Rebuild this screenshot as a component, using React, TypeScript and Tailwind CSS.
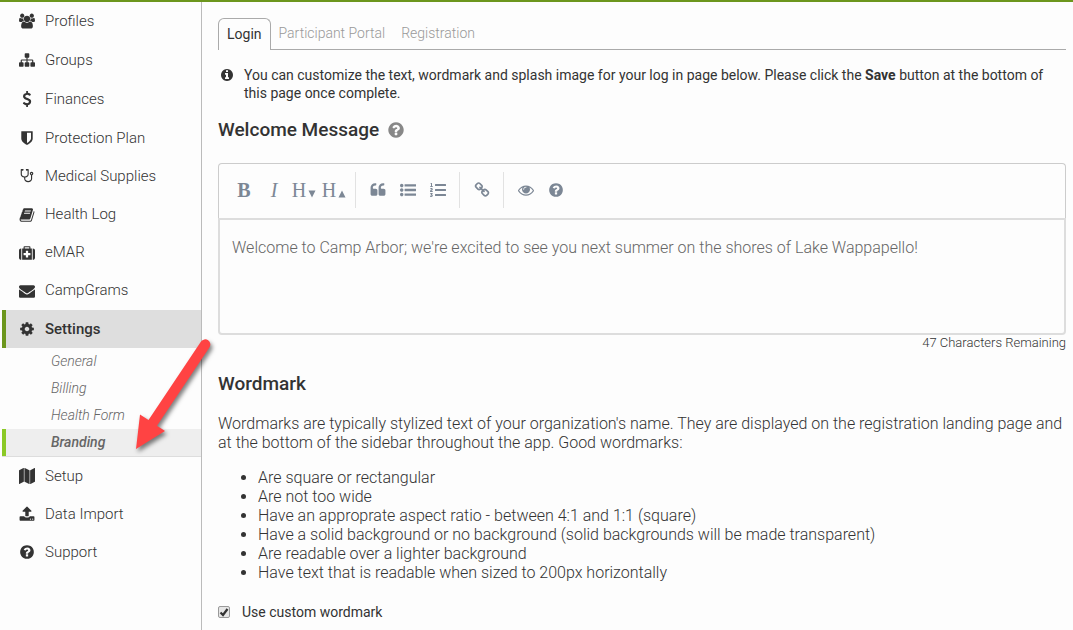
import React from 'react';
import { FaListOl } from 'react-icons/fa';

const ICONS = {
  users:
    'M593 896q-162 5-265 128h-134q-82 0-138-40.5t-56-118.5q0-353 124-353 6 0 43.5 21t97.5 42.5 119 21.5q67 0 133-23-5 37-5 66 0 139 81 256zm1071 637q0 120-73 189.5t-194 69.5h-874q-121 0-194-69.5t-73-189.5q0-53 3.5-103.5t14-109 26.5-108.5 43-97.5 62-81 85.5-53.5 111.5-20q10 0 43 21.5t73 48 107 48 135 21.5 135-21.5 107-48 73-48 43-21.5q61 0 111.5 20t85.5 53.5 62 81 43 97.5 26.5 108.5 14 109 3.5 103.5zm-1024-1277q0 106-75 181t-181 75-181-75-75-181 75-181 181-75 181 75 75 181zm704 384q0 159-112.5 271.5t-271.5 112.5-271.5-112.5-112.5-271.5 112.5-271.5 271.5-112.5 271.5 112.5 112.5 271.5zm576 225q0 78-56 118.5t-138 40.5h-134q-103-123-265-128 81-117 81-256 0-29-5-66 66 23 133 23 59 0 119-21.5t97.5-42.5 43.5-21q124 0 124 353zm-128-609q0 106-75 181t-181 75-181-75-75-181 75-181 181-75 181 75 75 181z',
  sitemap:
    'M1792 1248v320q0 40-28 68t-68 28h-320q-40 0-68-28t-28-68v-320q0-40 28-68t68-28h96v-192h-512v192h96q40 0 68 28t28 68v320q0 40-28 68t-68 28h-320q-40 0-68-28t-28-68v-320q0-40 28-68t68-28h96v-192h-512v192h96q40 0 68 28t28 68v320q0 40-28 68t-68 28h-320q-40 0-68-28t-28-68v-320q0-40 28-68t68-28h96v-192q0-52 38-90t90-38h512v-192h-96q-40 0-68-28t-28-68v-320q0-40 28-68t68-28h320q40 0 68 28t28 68v320q0 40-28 68t-68 28h-96v192h512q52 0 90 38t38 90v192h96q40 0 68 28t28 68z',
  dollar:
    'M1362 1185q0 153-99.5 263.5t-258.5 136.5v175q0 14-9 23t-23 9h-135q-13 0-22.5-9.5t-9.5-22.5v-175q-66-9-127.5-31t-101.5-44.5-74-48-46.5-37.5-17.5-18q-17-21-2-41l103-135q7-10 23-12 15-2 24 9l2 2q113 99 243 125 37 8 74 8 81 0 142.5-43t61.5-122q0-28-15-53t-33.5-42-58.5-37.5-66-32-80-32.5q-39-16-61.5-25t-61.5-26.5-62.5-31-56.5-35.5-53.5-42.5-43.5-49-35.5-58-21-66.5-8.5-78q0-138 98-242t255-134v-180q0-13 9.5-22.5t22.5-9.5h135q14 0 23 9t9 23v176q57 6 110.5 23t87 33.5 63.5 37.5 39 29 15 14q17 18 5 38l-81 146q-8 15-23 16-14 3-27-7-3-3-14.5-12t-39-26.5-58.5-32-74.5-26-85.5-11.5q-95 0-155 43t-60 111q0 26 8.5 48t29.5 41.5 39.5 33 56 31 60.5 27 70 27.5q53 20 81 31.5t76 35 75.5 42.5 62 50 53 63.5 31.5 76.5 13 94z',
  shield:
    'M1344 960v-640h-448v1137q119-63 213-137 235-184 235-360zm192-768v768q0 86-33.5 170.5t-83 150-118 127.5-126.5 103-121 77.5-89.5 49.5-42.5 20q-12 6-26 6t-26-6q-16-7-42.5-20t-89.5-49.5-121-77.5-126.5-103-118-127.5-83-150-33.5-170.5v-768q0-26 19-45t45-19h1152q26 0 45 19t19 45z',
  stethoscope:
    'M1472 512q0-26-19-45t-45-19-45 19-19 45 19 45 45 19 45-19 19-45zm128 0q0 62-35.5 111t-92.5 70v395q0 159-131.5 271.5t-316.5 112.5-316.5-112.5-131.5-271.5v-132q-164-20-274-128t-110-252v-512q0-26 19-45t45-19q6 0 16 2 17-30 47-48t65-18q53 0 90.5 37.5t37.5 90.5-37.5 90.5-90.5 37.5q-33 0-64-18v402q0 106 94 181t226 75 226-75 94-181v-402q-31 18-64 18-53 0-90.5-37.5t-37.5-90.5 37.5-90.5 90.5-37.5q35 0 65 18t47 48q10-2 16-2 26 0 45 19t19 45v512q0 144-110 252t-274 128v132q0 106 94 181t226 75 226-75 94-181v-395q-57-21-92.5-70t-35.5-111q0-80 56-136t136-56 136 56 56 136z',
  book:
    'M1703 478q40 57 18 129l-275 906q-19 64-76.5 107.5t-122.5 43.5h-923q-77 0-148.5-53.5t-99.5-131.5q-24-67-2-127 0-4 3-27t4-37q1-8-3-21.5t-3-19.5q2-11 8-21t16.5-23.5 16.5-23.5q23-38 45-91.5t30-91.5q3-10 .5-30t-.5-28q3-11 17-28t17-23q21-36 42-92t25-90q1-9-2.5-32t.5-28q4-13 22-30.5t22-22.5q19-26 42.5-84.5t27.5-96.5q1-8-3-25.5t-2-26.5q2-8 9-18t18-23 17-21q8-12 16.5-30.5t15-35 16-36 19.5-32 26.5-23.5 36-11.5 47.5 5.5l-1 3q38-9 51-9h761q74 0 114 56t18 130l-274 906q-36 119-71.5 153.5t-128.5 34.5h-869q-27 0-38 15-11 16-1 43 24 70 144 70h923q29 0 56-15.5t35-41.5l300-987q7-22 5-57 38 15 59 43zm-1064 2q-4 13 2 22.5t20 9.5h608q13 0 25.5-9.5t16.5-22.5l21-64q4-13-2-22.5t-20-9.5h-608q-13 0-25.5 9.5t-16.5 22.5zm-83 256q-4 13 2 22.5t20 9.5h608q13 0 25.5-9.5t16.5-22.5l21-64q4-13-2-22.5t-20-9.5h-608q-13 0-25.5 9.5t-16.5 22.5z',
  medkit:
    'M1280 1120v-192q0-14-9-23t-23-9h-224v-224q0-14-9-23t-23-9h-192q-14 0-23 9t-9 23v224h-224q-14 0-23 9t-9 23v192q0 14 9 23t23 9h224v224q0 14 9 23t23 9h192q14 0 23-9t9-23v-224h224q14 0 23-9t9-23zm-640-736h512v-128h-512v128zm-384 0v1280h-32q-92 0-158-66t-66-158v-832q0-92 66-158t158-66h32zm1184 0v1280h-1088v-1280h160v-160q0-40 28-68t68-28h576q40 0 68 28t28 68v160h160zm352 224v832q0 92-66 158t-158 66h-32v-1280h32q92 0 158 66t66 158z',
  envelope:
    'M1792 710v794q0 66-47 113t-113 47h-1472q-66 0-113-47t-47-113v-794q44 49 101 87 362 246 497 345 57 42 92.5 65.5t94.5 48 110 24.5h2q51 0 110-24.5t94.5-48 92.5-65.5q170-123 498-345 57-39 100-87zm0-294q0 79-49 151t-122 123q-376 261-468 325-10 7-42.5 31t-54 38.5-52 32.5-57.5 27-50 9h-2q-23 0-50-9t-57.5-27-52-32.5-54-38.5-42.5-31q-91-64-262-182.5t-205-142.5q-62-42-117-115.5t-55-136.5q0-78 41.5-130t118.5-52h1472q65 0 112.5 47t47.5 113z',
  cog:
    'M1152 896q0-106-75-181t-181-75-181 75-75 181 75 181 181 75 181-75 75-181zm512-109v222q0 12-8 23t-20 13l-185 28q-19 54-39 91 35 50 107 138 10 12 10 25t-9 23q-27 37-99 108t-94 71q-12 0-26-9l-138-108q-44 23-91 38-16 136-29 186-7 28-36 28h-222q-14 0-24.5-8.5t-11.5-21.5l-28-184q-49-16-90-37l-141 107q-10 9-25 9-14 0-25-11-126-114-165-168-7-10-7-23 0-12 8-23 15-21 51-66.5t54-70.5q-27-50-41-99l-183-27q-13-2-21-12.5t-8-23.5v-222q0-12 8-23t19-13l186-28q14-46 39-92-40-57-107-138-10-12-10-24 0-10 9-23 26-36 98.5-107.5t94.5-71.5q13 0 26 10l138 107q44-23 91-38 16-136 29-186 7-28 36-28h222q14 0 24.5 8.5t11.5 21.5l28 184q49 16 90 37l142-107q9-9 24-9 13 0 25 10 129 119 165 170 7 8 7 22 0 12-8 23-15 21-51 66.5t-54 70.5q26 50 41 98l183 28q13 2 21 12.5t8 23.5z',
  map:
    'M512 0q13 0 22.5 9.5t9.5 22.5v1472q0 20-17 28l-480 256q-7 4-15 4-13 0-22.5-9.5t-9.5-22.5v-1472q0-20 17-28l480-256q7-4 15-4zm1248 0q13 0 22.5 9.5t9.5 22.5v1472q0 20-17 28l-480 256q-7 4-15 4-13 0-22.5-9.5t-9.5-22.5v-1472q0-20 17-28l480-256q7-4 15-4zm-1120 0q8 0 14 3l512 256q18 10 18 29v1472q0 13-9.5 22.5t-22.5 9.5q-8 0-14-3l-512-256q-18-10-18-29v-1472q0-13 9.5-22.5t22.5-9.5z',
  upload:
    'M1344 1472q0-26-19-45t-45-19-45 19-19 45 19 45 45 19 45-19 19-45zm256 0q0-26-19-45t-45-19-45 19-19 45 19 45 45 19 45-19 19-45zm128-224v320q0 40-28 68t-68 28h-1472q-40 0-68-28t-28-68v-320q0-40 28-68t68-28h427q21 56 70.5 92t110.5 36h256q61 0 110.5-36t70.5-92h427q40 0 68 28t28 68zm-325-648q-17 40-59 40h-256v448q0 26-19 45t-45 19h-256q-26 0-45-19t-19-45v-448h-256q-42 0-59-40-17-39 14-69l448-448q18-19 45-19t45 19l448 448q31 30 14 69z',
  question:
    'M1024 1376v-192q0-14-9-23t-23-9h-192q-14 0-23 9t-9 23v192q0 14 9 23t23 9h192q14 0 23-9t9-23zm256-672q0-88-55.5-163t-138.5-116-170-41q-243 0-371 213-15 24 8 42l132 100q7 6 19 6 16 0 25-12 53-68 86-92 34-24 86-24 48 0 85.5 26t37.5 59q0 38-20 61t-68 45q-63 28-115.5 86.5t-52.5 125.5v36q0 14 9 23t23 9h192q14 0 23-9t9-23q0-19 21.5-49.5t54.5-49.5q32-18 49-28.5t46-35 44.5-48 28-60.5 12.5-81zm384 192q0 209-103 385.5t-279.5 279.5-385.5 103-385.5-103-279.5-279.5-103-385.5 103-385.5 279.5-279.5 385.5-103 385.5 103 279.5 279.5 103 385.5z',
  info:
    'M1152 1376v-160q0-14-9-23t-23-9h-96v-512q0-14-9-23t-23-9h-320q-14 0-23 9t-9 23v160q0 14 9 23t23 9h96v320h-96q-14 0-23 9t-9 23v160q0 14 9 23t23 9h448q14 0 23-9t9-23zm-128-896v-160q0-14-9-23t-23-9h-192q-14 0-23 9t-9 23v160q0 14 9 23t23 9h192q14 0 23-9t9-23zm640 416q0 209-103 385.5t-279.5 279.5-385.5 103-385.5-103-279.5-279.5-103-385.5 103-385.5 279.5-279.5 385.5-103 385.5 103 279.5 279.5 103 385.5z',
  quote:
    'M832 960v384q0 80-56 136t-136 56h-384q-80 0-136-56t-56-136v-704q0-104 40.5-198.5t109.5-163.5 163.5-109.5 198.5-40.5h64q26 0 45 19t19 45v128q0 26-19 45t-45 19h-64q-106 0-181 75t-75 181v32q0 40 28 68t68 28h224q80 0 136 56t56 136zm896 0v384q0 80-56 136t-136 56h-384q-80 0-136-56t-56-136v-704q0-104 40.5-198.5t109.5-163.5 163.5-109.5 198.5-40.5h64q26 0 45 19t19 45v128q0 26-19 45t-45 19h-64q-106 0-181 75t-75 181v32q0 40 28 68t68 28h224q80 0 136 56t56 136z',
  list:
    'M384 1408q0 80-56 136t-136 56-136-56-56-136 56-136 136-56 136 56 56 136zm0-512q0 80-56 136t-136 56-136-56-56-136 56-136 136-56 136 56 56 136zm1408 416v192q0 13-9.5 22.5t-22.5 9.5h-1216q-13 0-22.5-9.5t-9.5-22.5v-192q0-13 9.5-22.5t22.5-9.5h1216q13 0 22.5 9.5t9.5 22.5zm-1408-928q0 80-56 136t-136 56-136-56-56-136 56-136 136-56 136 56 56 136zm1408 416v192q0 13-9.5 22.5t-22.5 9.5h-1216q-13 0-22.5-9.5t-9.5-22.5v-192q0-13 9.5-22.5t22.5-9.5h1216q13 0 22.5 9.5t9.5 22.5zm0-512v192q0 13-9.5 22.5t-22.5 9.5h-1216q-13 0-22.5-9.5t-9.5-22.5v-192q0-13 9.5-22.5t22.5-9.5h1216q13 0 22.5 9.5t9.5 22.5z',
  link:
    'M1520 1216q0-40-28-68l-208-208q-28-28-68-28-42 0-72 32 3 3 19 18.5t21.5 21.5 15 19 13 25.5 3.5 27.5q0 40-28 68t-68 28q-15 0-27.5-3.5t-25.5-13-19-15-21.5-21.5-18.5-19q-33 31-33 73 0 40 28 68l206 207q27 27 68 27 40 0 68-26l147-146q28-28 28-67zm-703-705q0-40-28-68l-206-207q-28-28-68-28-39 0-68 27l-147 146q-28 28-28 67 0 40 28 68l208 208q27 27 68 27 42 0 72-31-3-3-19-18.5t-21.5-21.5-15-19-13-25.5-3.5-27.5q0-40 28-68t68-28q15 0 27.5 3.5t25.5 13 19 15 21.5 21.5 18.5 19q33-31 33-73zm895 705q0 120-85 203l-147 146q-83 83-203 83-121 0-204-85l-206-207q-83-83-83-203 0-123 88-209l-88-88q-86 88-208 88-120 0-204-84l-208-208q-84-84-84-204t85-203l147-146q83-83 203-83 121 0 204 85l206 207q83 83 83 203 0 123-88 209l88 88q86-88 208-88 120 0 204 84l208 208q84 84 84 204z',
  eye:
    'M1664 960q-152-236-381-353 61 104 61 225 0 185-131.5 316.5t-316.5 131.5-316.5-131.5-131.5-316.5q0-121 61-225-229 117-381 353 133 205 333.5 326.5t434.5 121.5 434.5-121.5 333.5-326.5zm-720-384q0-20-14-34t-34-14q-125 0-214.5 89.5t-89.5 214.5q0 20 14 34t34 14 34-14 14-34q0-86 61-147t147-61q20 0 34-14t14-34zm848 384q0 34-20 69-140 230-376.5 368.5t-499.5 138.5-499.5-139-376.5-368q-20-35-20-69t20-69q140-229 376.5-368t499.5-139 499.5 139 376.5 368q20 35 20 69z',
};

type IconName = keyof typeof ICONS;

const Icon = ({ name, className = 'size-4' }: { name: IconName; className?: string }) => (
  <svg
    viewBox={name === 'users' ? '0 0 1920 1792' : '0 0 1792 1792'}
    fill="currentColor"
    aria-hidden="true"
    className={`shrink-0 ${className}`}
  >
    <path d={ICONS[name]} />
  </svg>
);

interface NavItem {
  label: string;
  icon: IconName;
}

const PEOPLE_NAV: NavItem[] = [
  { label: 'Profiles', icon: 'users' },
  { label: 'Groups', icon: 'sitemap' },
  { label: 'Finances', icon: 'dollar' },
  { label: 'Protection Plan', icon: 'shield' },
];

const HEALTH_NAV: NavItem[] = [
  { label: 'Medical Supplies', icon: 'stethoscope' },
  { label: 'Health Log', icon: 'book' },
  { label: 'eMAR', icon: 'medkit' },
  { label: 'CampGrams', icon: 'envelope' },
];

const TOOLS_NAV: NavItem[] = [
  { label: 'Setup', icon: 'map' },
  { label: 'Data Import', icon: 'upload' },
  { label: 'Support', icon: 'question' },
];

const SETTINGS_NAV = ['General', 'Billing', 'Health Form', 'Branding'];

const WORDMARK_TIPS = [
  'Are square or rectangular',
  'Are not too wide',
  'Have an approprate aspect ratio - between 4:1 and 1:1 (square)',
  'Have a solid background or no background (solid backgrounds will be made transparent)',
  'Are readable over a lighter background',
  'Have text that is readable when sized to 200px horizontally',
];

const NavList = ({ items, rowClass }: { items: NavItem[]; rowClass: string }) => (
  <ul>
    {items.map((item) => (
      <li key={item.label}>
        <a href="#" className={`flex items-center gap-2.5 pl-[19px] ${rowClass}`}>
          <Icon name={item.icon} />
          {item.label}
        </a>
      </li>
    ))}
  </ul>
);

const Sidebar: React.FC = () => (
  <nav className="relative w-[202px] shrink-0 border-r border-[#bbb] text-[15px] font-light">
    <NavList items={PEOPLE_NAV} rowClass="h-[39px] pb-px" />
    <NavList items={HEALTH_NAV} rowClass="h-[38px] pb-px" />
    <a
      href="#"
      className="ml-0.5 flex h-[38px] items-center gap-2.5 border-l-4 border-[#6c961d] bg-[#dedede] pl-[13px] font-medium"
    >
      <Icon name="cog" />
      Settings
    </a>
    <ul className="ml-0.5 border-b border-[#ddd] text-sm text-[#666] italic">
      {SETTINGS_NAV.map((label) => (
        <li key={label}>
          <a
            href="#"
            className={`flex h-[27px] items-center border-l-4 pb-0.5 pl-[45px] ${
              label === 'Branding' ? 'border-[#8bc926] bg-[#eee] font-medium' : 'border-transparent'
            }`}
          >
            {label}
          </a>
        </li>
      ))}
    </ul>
    <NavList items={TOOLS_NAV} rowClass="h-[38px]" />

    {/* Callout arrow pointing at Branding */}
    <svg
      viewBox="0 0 90 124"
      aria-hidden="true"
      className="pointer-events-none absolute top-[332px] left-[130px] z-10 h-[124px] w-[90px] drop-shadow-[2px_3px_2px_rgba(0,0,0,0.5)]"
    >
      <path
        d="M71 7.5 A5 5 0 0 1 79.4 13.4 L27 91.7 L35 97 L6 115 L10 80.5 L18.5 86 Z"
        fill="#ff4343"
      />
    </svg>
  </nav>
);

const ToolButton = ({ label, children }: { label: string; children: React.ReactNode }) => (
  <button type="button" aria-label={label} className="flex h-9 w-[30px] items-center justify-center">
    {children}
  </button>
);

const Toolbar: React.FC = () => (
  <div className="flex h-[55px] items-center rounded-t border border-b-0 border-[#ccc] pb-0.5 pl-2.5 text-[#7c8795]">
    <div className="flex border-r border-[#e2e2e2] pr-1.5 font-['Liberation_Serif',serif] text-xl leading-none">
      <ToolButton label="Bold"><b>B</b></ToolButton>
      <ToolButton label="Italic"><i>I</i></ToolButton>
      <ToolButton label="Smaller heading">
        H
        <svg viewBox="0 0 8 8" aria-hidden="true" className="mt-2 ml-0.5 size-2" fill="currentColor">
          <path d="M0.5 0.5 H7.5 L4 7.5 Z" />
        </svg>
      </ToolButton>
      <ToolButton label="Bigger heading">
        H
        <svg viewBox="0 0 8 8" aria-hidden="true" className="mt-2 ml-0.5 size-2" fill="currentColor">
          <path d="M0.5 7.5 H7.5 L4 0.5 Z" />
        </svg>
      </ToolButton>
    </div>
    <div className="flex border-r border-[#e2e2e2] pr-1.5 pl-[7px]">
      <ToolButton label="Quote"><Icon name="quote" /></ToolButton>
      <ToolButton label="Bulleted list"><Icon name="list" /></ToolButton>
      <ToolButton label="Numbered list"><FaListOl className="size-4" /></ToolButton>
    </div>
    <div className="flex border-r border-[#e2e2e2] pr-1.5 pl-[7px]">
      <ToolButton label="Link"><Icon name="link" /></ToolButton>
    </div>
    <div className="flex pr-1.5 pl-[7px]">
      <ToolButton label="Preview"><Icon name="eye" /></ToolButton>
      <ToolButton label="Markdown guide"><Icon name="question" /></ToolButton>
    </div>
  </div>
);

const App: React.FC = () => {
  return (
    <div className="flex min-h-screen border-t-2 border-[#6c961d] bg-[#fdfdfd] font-['Roboto',sans-serif] text-[#333]">
      <Sidebar />

      <main className="min-w-0 flex-1 pt-4 pr-[7px] pl-4">
        <div role="tablist" className="flex h-8 border-b border-[#aaa] text-sm">
          <button
            type="button"
            role="tab"
            aria-selected="true"
            className="-mb-px rounded-t-md border border-b-0 border-[#aaa] bg-[#fdfdfd] px-2 pb-0.5"
          >
            Login
          </button>
          <button type="button" role="tab" aria-selected="false" className="px-2 pb-0.5 font-light text-[#999]">
            Participant Portal
          </button>
          <button type="button" role="tab" aria-selected="false" className="px-2 pb-0.5 font-light text-[#999]">
            Registration
          </button>
        </div>

        <div className="mt-4 flex gap-2.5 pl-0.5 text-sm leading-[18px]">
          <Icon name="info" className="mt-0.5 size-3.5" />
          <p>
            You can customize the text, wordmark and splash image for your log in page below. Please click the{' '}
            <b className="font-bold">Save</b> button at the bottom of this page once complete.
          </p>
        </div>

        <h2 className="mt-4 flex items-center gap-2 text-[19px] leading-6 font-medium">
          <label htmlFor="welcome-message">Welcome Message</label>
          <Icon name="question" className="size-[18px] text-[#888]" />
        </h2>

        <div className="mt-[21px]">
          <Toolbar />
          <textarea
            id="welcome-message"
            defaultValue="Welcome to Camp Arbor; we're excited to see you next summer on the shores of Lake Wappapello!"
            className="block h-[117px] w-full resize-none rounded-b border-2 border-[#ddd] bg-transparent px-3 py-[18px] text-base leading-5 font-light text-[#666]"
          />
        </div>
        <p className="text-right text-[13px] leading-4 font-light">47 Characters Remaining</p>

        <h2 className="mt-[21px] text-[19px] leading-6 font-medium">Wordmark</h2>
        <p className="mt-[18px] text-base leading-[19px] font-light">
          Wordmarks are typically stylized text of your organization's name. They are displayed on the registration
          landing page and at the bottom of the sidebar throughout the app. Good wordmarks:
        </p>
        <ul className="mt-4 list-disc pl-10 text-base leading-[19px] font-light">
          {WORDMARK_TIPS.map((tip) => (
            <li key={tip}>{tip}</li>
          ))}
        </ul>

        <label className="mt-5 flex items-center gap-3 text-sm leading-5">
          <span className="relative flex size-3">
            <input
              type="checkbox"
              defaultChecked
              className="peer size-3 appearance-none rounded-xs border border-[#999] bg-[#e6e6e6]"
            />
            <svg
              viewBox="0 0 12 12"
              aria-hidden="true"
              className="pointer-events-none absolute inset-0 hidden size-3 peer-checked:block"
            >
              <path d="M2.5 6.5 L5 9 L9.5 3" fill="none" stroke="#333" strokeWidth="2.2" />
            </svg>
          </span>
          Use custom wordmark
        </label>
      </main>
    </div>
  );
};

export default App;
